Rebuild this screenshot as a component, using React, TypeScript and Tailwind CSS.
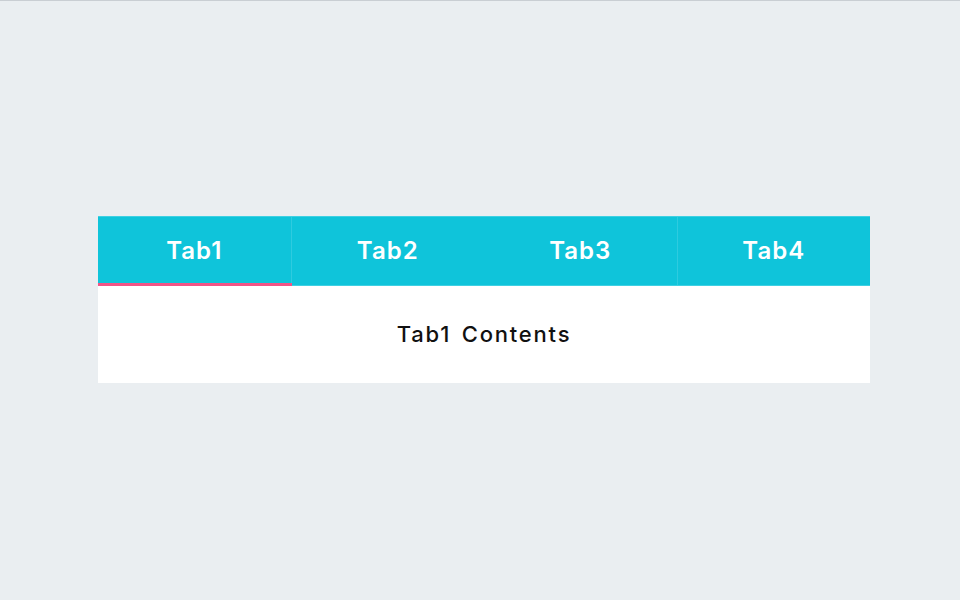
import { useState } from "react";

const TABS = ["Tab1", "Tab2", "Tab3", "Tab4"];

export default function App() {
  const [active, setActive] = useState(0);

  return (
    <div
      className="w-[960px] h-[600px] bg-[#eaeef1] border-t border-[#c9ced3] pt-[215px] pl-[98px]"
      style={{ fontFamily: "Inter, 'Liberation Sans', sans-serif" }}
    >
      <div className="w-[772px] bg-white">
        {/* Tab bar */}
        <div className="flex h-[70px] bg-[#0fc4da] border-t border-[#3fd0e2] border-b border-b-[#3fd0e2]">
          {TABS.map((t, i) => (
            <button
              key={t}
              onClick={() => setActive(i)}
              className={[
                "relative flex-1 flex items-center justify-center text-white text-[24px] font-semibold tracking-[1px]",
                i === 0 || i === 2 ? "border-r border-[#2ecbdf]" : "",
              ].join(" ")}
            >
              {t}
              {active === i && (
                <span className="absolute left-0 right-[-1px] bottom-[-1px] h-[3px] bg-[#f25486]" />
              )}
            </button>
          ))}
        </div>

        {/* Content */}
        <div className="h-[97px] flex items-center justify-center text-[22px] font-medium text-[#111] tracking-[1.8px] [word-spacing:3px]">
          {TABS[active]} Contents
        </div>
      </div>
    </div>
  );
}
